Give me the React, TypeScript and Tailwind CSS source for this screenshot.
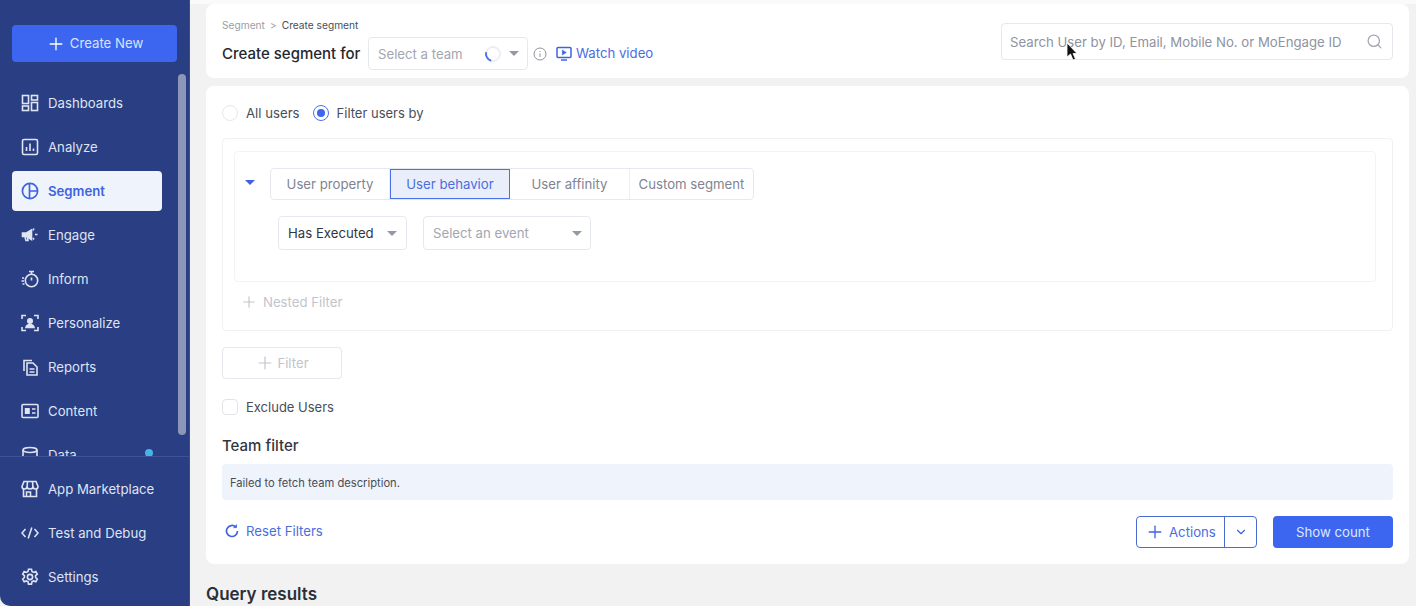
import { ChevronDown, Plus, Search } from 'lucide-react';
import type { ReactNode } from 'react';

const iconProps = {
  width: 18,
  height: 18,
  viewBox: '0 0 18 18',
  fill: 'none',
  stroke: 'currentColor',
  strokeWidth: 1.6,
};

const DashboardsIcon = () => (
  <svg {...iconProps}>
    <rect x="1.5" y="1.5" width="6" height="8" />
    <rect x="10.5" y="1.5" width="6" height="4.5" />
    <rect x="1.5" y="12" width="6" height="4.5" />
    <rect x="10.5" y="8.5" width="6" height="8" />
  </svg>
);

const AnalyzeIcon = () => (
  <svg {...iconProps}>
    <rect x="1.5" y="1.5" width="15" height="15" rx="1.5" />
    <path d="M5.5 13V9M9 13V5.5M12.5 13v-2.5" />
  </svg>
);

const SegmentIcon = () => (
  <svg width="18" height="18" viewBox="0 0 18 18" fill="none" stroke="currentColor" strokeWidth="1.7">
    <circle cx="9" cy="9" r="7.6" />
    <path d="M8.5 1.5V9H16.5M8.5 9v7.5" />
  </svg>
);

const EngageIcon = () => (
  <svg {...iconProps}>
    <path d="M1.5 7h4l5-3v9.5l-5-3h-4z" fill="currentColor" />
    <path d="M4 11l1 3.5h2L6.5 11" />
    <path d="M13 2.5l-1 2M14 8.5h2.5M13 13.5l-1-1.5" />
  </svg>
);

const InformIcon = () => (
  <svg {...iconProps}>
    <circle cx="10.5" cy="10.5" r="6.2" />
    <path d="M8 1.5h5M10.5 1.5v3M10.5 7.5v3M1 8h2M0.5 11h2.5M1.5 14h2" />
  </svg>
);

const PersonalizeIcon = () => (
  <svg {...iconProps}>
    <path d="M1 5V1.5h4M13 1.5h4V5M17 13v3.5h-4M5 16.5H1V13" />
    <circle cx="9" cy="7" r="2.2" fill="currentColor" />
    <path d="M5 13.5c.5-2.4 2-3 4-3s3.500.6 4 3z" fill="currentColor" />
  </svg>
);

const ReportsIcon = () => (
  <svg {...iconProps}>
    <path d="M3 13V2.500h8" />
    <path d="M6 5h6l4 4v8H6z" />
    <path d="M8.500 11h5M8.500 14h5" />
  </svg>
);

const ContentIcon = () => (
  <svg {...iconProps}>
    <rect x="1" y="2.500" width="16" height="13" rx="1" />
    <rect x="3.800" y="6" width="5" height="6" fill="currentColor" stroke="none" />
    <path d="M11 7h3.500M11 11h3.500" />
  </svg>
);

const DataIcon = () => (
  <svg {...iconProps}>
    <ellipse cx="9" cy="4" rx="7" ry="2.500" />
    <path d="M2 4v10c0 1.400 3 2.500 7 2.500s7-1.100 7-2.500V4" />
  </svg>
);

const MarketplaceIcon = () => (
  <svg {...iconProps}>
    <path d="M3 1.500h12l2 5c0 1.500-1 2.500-2.500 2.500-1 0-2-.6-2.500-1.500-.5.900-1.500 1.500-3 1.500s-2.500-.6-3-1.500C5.500 8.400 4.500 9 3.500 9 2 9 1 8 1 6.500z" />
    <path d="M6.500 1.500L6 8M11.500 1.500L12 8M2.500 9v7.500h13V9M5.500 16.500V12h4v4.500" />
  </svg>
);

const DebugIcon = () => (
  <svg {...iconProps}>
    <path d="M4.500 5L1 9l3.500 4M13.500 5L17 9l-3.500 4M10.800 3.500L7.200 14.500" />
  </svg>
);

const SettingsIcon = () => (
  <svg {...iconProps}>
    <circle cx="9" cy="9" r="2.600" />
    <path d="M7.500 1.200h3l.5 2.300 1.600.9 2.200-.8 1.500 2.600-1.700 1.500v1.800l1.700 1.600-1.500 2.600-2.200-.8-1.600.9-.5 2.300h-3L7 13.800l-1.600-.9-2.200.8-1.500-2.600 1.700-1.600V7.700L1.700 6.200l1.500-2.600 2.200.8L7 3.500z" />
  </svg>
);

const Caret = ({ className }: { className: string }) => (
  <span className={`w-0 h-0 border-x-[5px] border-x-transparent border-t-[5px] ${className}`} />
);

// text sits a pixel high next to the icons without this
const Label = ({ children, className = '' }: { children: ReactNode; className?: string }) => (
  <span className={`pt-[2px] ${className}`}>{children}</span>
);

function NavItem({ icon, label, active, dot }: { icon: ReactNode; label: string; active?: boolean; dot?: boolean }) {
  return (
    <div
      className={`relative flex items-center h-10 w-[150px] shrink-0 rounded gap-[9px] pl-[9px] text-[13.2px] ${
        active ? 'bg-[#eff3fb] text-[#3f63e0] font-semibold' : 'text-[#dfe4f2]'
      }`}
    >
      <span className="flex w-[18px] justify-center">{icon}</span>
      <Label>{label}</Label>
      {dot && <span className="absolute left-[133px] top-[14px] size-2 rounded-full bg-[#45b4e6]" />}
    </div>
  );
}

function Tab({ label, width, active }: { label: string; width: string; active?: boolean }) {
  return (
    <div
      className={`flex items-center justify-center h-full ${width} ${
        active ? 'bg-[#e9eefa] border border-[#4a72e8] text-[#4a6ee0]' : 'text-[#7f8492]'
      }`}
    >
      <Label>{label}</Label>
    </div>
  );
}

function Segmented() {
  return (
    <div className="flex h-8 w-[484px] ml-[15px] rounded border border-[#e6e8ef] divide-x divide-[#eceef3] text-[13.2px]">
      <Tab label="User property" width="w-[119px]" />
      <Tab label="User behavior" width="w-[120px]" active />
      <Tab label="User affinity" width="w-[120px]" />
      <Tab label="Custom segment" width="w-[123px]" />
    </div>
  );
}

export default function App() {
  return (
    <div className="flex h-[606px] w-[1416px] overflow-hidden bg-[#f2f2f3] font-['Inter',sans-serif] text-[#33363f]">
      <aside className="relative flex flex-col w-[190px] shrink-0 bg-[#2a3e84] rounded-bl-[10px] border-r border-[#3a4d90]">
        <div className="flex items-center justify-center gap-1 h-[37px] w-[165px] shrink-0 ml-3 mt-[25px] rounded bg-[#3d66f0] text-[13.2px] text-[#d9e2fb]">
          <Plus size={20} strokeWidth={1.600} className="text-white" />
          Create New
        </div>
        <nav className="flex flex-col gap-1 h-[395px] shrink-0 overflow-hidden pt-[21px] pl-3 border-b border-[#3f5296]">
          <NavItem icon={<DashboardsIcon />} label="Dashboards" />
          <NavItem icon={<AnalyzeIcon />} label="Analyze" />
          <NavItem icon={<SegmentIcon />} label="Segment" active />
          <NavItem icon={<EngageIcon />} label="Engage" />
          <NavItem icon={<InformIcon />} label="Inform" />
          <NavItem icon={<PersonalizeIcon />} label="Personalize" />
          <NavItem icon={<ReportsIcon />} label="Reports" />
          <NavItem icon={<ContentIcon />} label="Content" />
          <NavItem icon={<DataIcon />} label="Data" dot />
        </nav>
        <div className="flex flex-col gap-1 pt-[12px] pl-3">
          <NavItem icon={<MarketplaceIcon />} label="App Marketplace" />
          <NavItem icon={<DebugIcon />} label="Test and Debug" />
          <NavItem icon={<SettingsIcon />} label="Settings" />
        </div>
        <span className="absolute left-[178px] top-[74px] w-2 h-[361px] rounded bg-[#8b96b8]" />
      </aside>

      <main className="relative flex flex-col flex-1 pl-4 pr-[7px] border-t-[4px] border-t-[#fafafb]">
        <section className="flex justify-between h-[74px] shrink-0 rounded-lg bg-white pl-4 pr-4">
          <div>
            <div className="flex items-center gap-[5px] h-[14px] mt-[14px] text-[10.2px]">
              <Label className="text-[#9a9da8]">Segment</Label>
              <Label className="text-[#9a9da8]">&gt;</Label>
              <Label className="text-[#4a4d57]">Create segment</Label>
            </div>
            <div className="flex items-center h-[33px] mt-[5px]">
              <Label className="text-[15px] font-medium text-[#24272f] w-[146px]">Create segment for</Label>
              <div className="flex items-center w-[160px] h-full rounded border border-[#e6e8ef] pl-[9px]">
                <Label className="text-[13.2px] text-[#a3a6b0] w-[107px]">Select a team</Label>
                <span className="size-4 rounded-full border-2 border-[#eceef3] border-l-[#4a72e8] rotate-[-30deg]" />
                <Caret className="ml-[8px] border-t-[#9599a5]" />
              </div>
              <svg className="ml-[5px] text-[#8f93a0]" width="14" height="14" viewBox="0 0 14 14" fill="none" stroke="currentColor" strokeWidth="1">
                <circle cx="7" cy="7" r="6" />
                <path d="M7 6.300v3.700M7 4v1" />
              </svg>
              <svg className="ml-[9px] text-[#3f63e0]" width="16" height="15" viewBox="0 0 16 15" fill="none" stroke="currentColor" strokeWidth="1.500">
                <rect x="1" y="1.500" width="14" height="10" rx="1" />
                <path d="M6.300 4v5l4-2.500z" fill="currentColor" strokeWidth="0.500" />
                <path d="M5 14h6" />
              </svg>
              <span className="ml-[4px] text-[13.2px] text-[#4a6ee0]">Watch video</span>
            </div>
          </div>
          <div className="flex items-center justify-between w-[392px] h-[37px] mt-[19px] rounded border border-[#e6e8ef] pl-2 pr-[9px] text-[13.2px] text-[#8f93a0]">
            <Label>Search User by ID, Email, Mobile No. or MoEngage ID</Label>
            <Search size={17} strokeWidth={1.800} className="text-[#a2a6b2]" />
          </div>
        </section>

        <section className="flex flex-col h-[478px] shrink-0 mt-2 rounded-lg bg-white px-4">
          <div className="flex items-center h-[16px] mt-[19px] text-[13.2px] text-[#4a4d57]">
            <span className="size-4 rounded-full border border-[#e6e8ef]" />
            <Label className="ml-2">All users</Label>
            <span className="flex items-center justify-center size-4 ml-[13px] rounded-full border border-[#4a72e8]">
              <span className="size-2 rounded-full bg-[#3d66f0]" />
            </span>
            <Label className="ml-2 text-[13px]">Filter users by</Label>
          </div>

          <div className="flex flex-col h-[193px] mt-[17px] rounded border border-[#f0f1f4] pl-[11px] pr-4 pt-3">
            <div className="h-[131px] shrink-0 rounded border border-[#f2f3f6] pt-4">
              <div className="flex items-center h-8 pl-[10px]">
                <Caret className="border-t-[#3f63e0] -mt-[3px]" />
                <Segmented />
              </div>
              <div className="flex gap-4 mt-4 ml-[43px] h-[34px] text-[13.2px]">
                <div className="flex items-center justify-between w-[129px] rounded border border-[#e6e8ef] px-[9px] text-[#33363f]">
                  <Label>Has Executed</Label>
                  <Caret className="border-t-[#9599a5]" />
                </div>
                <div className="flex items-center justify-between w-[168px] rounded border border-[#e6e8ef] pl-[9px] pr-2 text-[#a3a6b0]">
                  <Label>Select an event</Label>
                  <Caret className="border-t-[#9599a5]" />
                </div>
              </div>
            </div>
            <div className="flex items-center h-[40px] pl-[6px] gap-[5px] text-[13.2px] text-[#c2c4cc]">
              <Plus size={18} strokeWidth={1.500} />
              <Label>Nested Filter</Label>
            </div>
          </div>

          <div className="flex items-center justify-center gap-[2px] w-[120px] h-8 mt-4 rounded border border-[#e6e8ef] text-[13.2px] text-[#c2c4cc]">
            <Plus size={20} strokeWidth={1.400} />
            <Label>Filter</Label>
          </div>

          <div className="flex items-center h-4 mt-5 text-[13px] text-[#4a4d57]">
            <span className="size-4 rounded-sm border border-[#e2e4ea]" />
            <Label className="ml-2">Exclude Users</Label>
          </div>

          <div className="mt-[22px] text-[15px] font-medium text-[#33363f] leading-[18px]">Team filter</div>

          <div className="flex items-center h-9 mt-[9px] rounded-sm bg-[#eef3fc] px-2 text-[11.2px] text-[#4a4d57]">
            <Label>Failed to fetch team description.</Label>
          </div>

          <div className="flex items-start justify-between mt-4">
            <div className="flex items-center gap-[7px] pl-[3px] h-[30px] text-[13.2px] text-[#4a6ee0]">
              <svg className="text-[#3f63e0]" width="14" height="14" viewBox="0 0 14 14" fill="none" stroke="currentColor" strokeWidth="1.700">
                <path d="M12.500 7A5.500 5.500 0 1 1 10.800 3" />
                <path d="M11.500 0.500V3.600H8.400" fill="currentColor" strokeWidth="0.800" />
              </svg>
              <Label>Reset Filters</Label>
            </div>
            <div className="flex gap-4 h-8 text-[13.2px]">
              <div className="flex w-[121px] rounded border border-[#4a6bd0] text-[#4a6ee0]">
                <div className="flex items-center gap-1 w-[88px] pl-2 border-r border-[#4a6bd0]">
                  <Plus size={20} strokeWidth={1.600} className="text-[#3f63e0]" />
                  <Label>Actions</Label>
                </div>
                <div className="flex items-center justify-center flex-1">
                  <ChevronDown size={14} strokeWidth={2} className="text-[#3f63e0]" />
                </div>
              </div>
              <div className="flex items-center justify-center w-[120px] rounded bg-[#3d66f0] text-[#dfe6fb]">
                <Label>Show count</Label>
              </div>
            </div>
          </div>
        </section>

        <div className="mt-5 text-[17px] font-semibold leading-5 text-[#2b2f38]">Query results</div>

        <svg className="absolute left-[876px] top-[38px]" width="12" height="19" viewBox="0 0 12 19">
          <path d="M1 1v14l3.500-3 2.500 6 2.500-1-2.500-5.500H11z" fill="#111" stroke="#fff" strokeWidth="0.800" />
        </svg>
      </main>
    </div>
  );
}
